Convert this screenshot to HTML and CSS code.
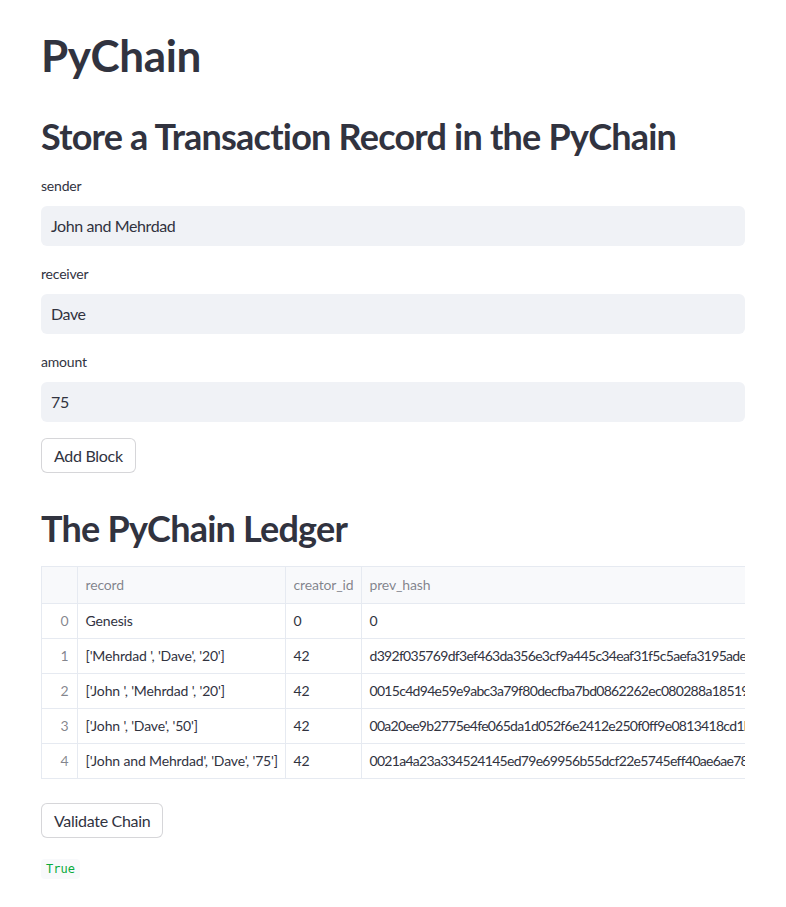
FILE: index.html
```html
<!DOCTYPE html>
<html lang="en">
<head>
<meta charset="utf-8">
<title>PyChain</title>
<link rel="stylesheet" href="styles.css">
</head>
<body>
<main class="block">
  <h1 class="title">PyChain</h1>
  <h2 class="heading">Store a Transaction Record in the PyChain</h2>

  <div class="field">
    <label class="label">sender</label>
    <div class="input">John and Mehrdad</div>
  </div>
  <div class="field">
    <label class="label">receiver</label>
    <div class="input">Dave</div>
  </div>
  <div class="field">
    <label class="label">amount</label>
    <div class="input">75</div>
  </div>
  <div><button class="btn">Add Block</button></div>

  <h2 class="heading heading-ledger">The PyChain Ledger</h2>

  <div class="table-wrap">
    <table class="ledger">
      <thead>
        <tr>
          <th class="idx"></th>
          <th class="c-record">record</th>
          <th class="c-creator">creator_id</th>
          <th class="c-hash">prev_hash</th>
        </tr>
      </thead>
      <tbody>
        <tr><td class="idx">0</td><td>Genesis</td><td>0</td><td class="hash">0</td></tr>
        <tr><td class="idx">1</td><td>['Mehrdad ', 'Dave', '20']</td><td>42</td><td class="hash">d392f035769df3ef463da356e3cf9a445c34eaf31f5c5aefa3195adef9e1d2c4</td></tr>
        <tr><td class="idx">2</td><td>['John ', 'Mehrdad ', '20']</td><td>42</td><td class="hash">0015c4d94e59e9abc3a79f80decfba7bd0862262ec080288a185191f3b7d0ae2</td></tr>
        <tr><td class="idx">3</td><td>['John ', 'Dave', '50']</td><td>42</td><td class="hash">00a20ee9b2775e4fe065da1d052f6e2412e250f0ff9e0813418cd1b4a27e90c5</td></tr>
        <tr><td class="idx">4</td><td>['John and Mehrdad', 'Dave', '75']</td><td>42</td><td class="hash">0021a4a23a334524145ed79e69956b55dcf22e5745eff40ae6ae78e3c1d04b9f</td></tr>
      </tbody>
    </table>
  </div>

  <div class="validate"><button class="btn">Validate Chain</button></div>

  <div class="result"><code class="code-true">True</code></div>
</main>
</body>
</html>
```
FILE: styles.css
```css
* { box-sizing: border-box; }
html, body { margin: 0; padding: 0; background: #ffffff; }
body {
  font-family: Lato, "Source Sans Pro", "Liberation Sans", sans-serif;
  color: rgb(49, 51, 63);
}
.block {
  width: 704px;
  margin-left: 41px;
  padding-top: 29px;
  padding-bottom: 20px;
  display: flex;
  flex-direction: column;
  gap: 16px;
}
.title {
  margin: 0;
  font-size: 44px;
  line-height: 53px;
  font-weight: 700;
  letter-spacing: -0.4px;
}
.heading {
  margin: 17px 0 0 0;
  font-size: 36px;
  line-height: 43px;
  font-weight: 700;
  letter-spacing: -0.78px;
}
.heading-ledger { margin-top: 18px; }
.field { display: flex; flex-direction: column; }
.label {
  font-size: 14px;
  line-height: 24px;
  margin-bottom: 8px;
  letter-spacing: -0.2px;
}
.input {
  height: 40px;
  background: rgb(240, 242, 246);
  border-radius: 6px;
  padding: 0 10px;
  font-size: 16px;
  line-height: 40px;
  letter-spacing: -0.4px;
}
.btn {
  font-family: inherit;
  font-size: 16px;
  letter-spacing: -0.3px;
  color: rgb(49, 51, 63);
  background: #ffffff;
  border: 1px solid rgba(49, 51, 63, 0.2);
  border-radius: 6px;
  height: 35px;
  padding: 0 12px;
}
.table-wrap {
  width: 704px;
  overflow: hidden;
  border: 1px solid rgb(230, 234, 241);
  border-right: none;
}
.ledger {
  border-collapse: collapse;
  font-size: 14px;
  letter-spacing: -0.15px;
  table-layout: fixed;
  width: 858px;
}
.ledger th, .ledger td {
  border: 1px solid rgb(230, 234, 241);
  padding: 0 8px;
  height: 35px;
  text-align: left;
  white-space: nowrap;
  overflow: hidden;
  font-weight: 400;
}
.ledger thead th {
  border-top: none;
  background: rgb(248, 249, 251);
  color: rgba(49, 51, 63, 0.6);
  height: 36px;
}
.ledger th:first-child, .ledger td:first-child { border-left: none; }
.ledger tbody tr:last-child td { border-bottom: none; }
.ledger .idx {
  width: 35px;
  text-align: right;
  color: rgba(49, 51, 63, 0.6);
}
.ledger td.idx { background: #ffffff; }
.ledger .c-record { width: 208px; }
.ledger .c-creator { width: 76px; }
.ledger .c-hash { width: 539px; }
.ledger .hash { letter-spacing: -0.7px; }
.validate { margin-top: 8px; }
.result { margin-top: 3px; }
.code-true {
  display: inline-block;
  font-family: "DejaVu Sans Mono", "Liberation Mono", monospace;
  font-size: 12px;
  line-height: 20px;
  padding: 0 5px;
  color: rgb(9, 171, 59);
  background: rgb(248, 249, 251);
  border-radius: 4px;
}
```
